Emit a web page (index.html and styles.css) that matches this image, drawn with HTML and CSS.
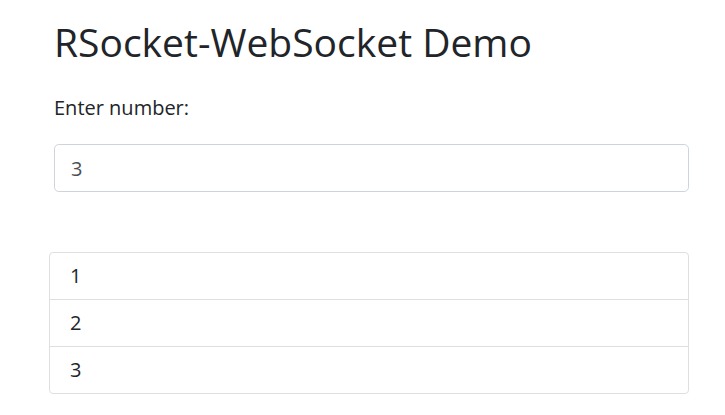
FILE: index.html
```html
<!DOCTYPE html>
<html lang="en">
<head>
<meta charset="utf-8">
<title>RSocket-WebSocket Demo</title>
<link rel="stylesheet" href="styles.css">
</head>
<body>
<div class="page">
  <h1 class="title">RSocket-WebSocket Demo</h1>
  <label class="label" for="num">Enter number:</label>
  <input class="field" id="num" type="text" value="3">
  <ul class="list">
    <li class="item">1</li>
    <li class="item">2</li>
    <li class="item">3</li>
  </ul>
</div>
</body>
</html>
```

FILE: styles.css
```css
* { box-sizing: border-box; }
html, body {
  margin: 0;
  background: #fff;
}
body {
  font-family: "Open Sans", "Noto Sans", sans-serif;
  font-size: 16px;
  line-height: 1.5;
  color: #212529;
}
.page {
  padding: 18px 36px 0 54px;
}
.title {
  margin: 0 0 27px;
  font-size: 39px;
  font-weight: 400;
  line-height: 48px;
}
.label {
  display: block;
  margin: 0 0 21px;
  font-size: 20px;
  line-height: 30px;
}
.field {
  display: block;
  width: 100%;
  height: 48px;
  padding: 8px 16px;
  font-family: inherit;
  font-size: 20px;
  line-height: 1.5;
  color: #495057;
  background: #fff;
  border: 1px solid #ced4da;
  border-radius: 4.8px;
  outline: none;
}
.list {
  list-style: none;
  margin: 60px 0 0 -5px;
  padding: 0;
  display: flex;
  flex-direction: column;
}
.item {
  padding: 8px 20px;
  font-size: 20px;
  line-height: 30px;
  border: 1px solid #dfdfdf;
  margin-bottom: -1px;
}
.item:first-child {
  border-top-left-radius: 4px;
  border-top-right-radius: 4px;
}
.item:last-child {
  margin-bottom: 0;
  border-bottom-left-radius: 4px;
  border-bottom-right-radius: 4px;
}
```
